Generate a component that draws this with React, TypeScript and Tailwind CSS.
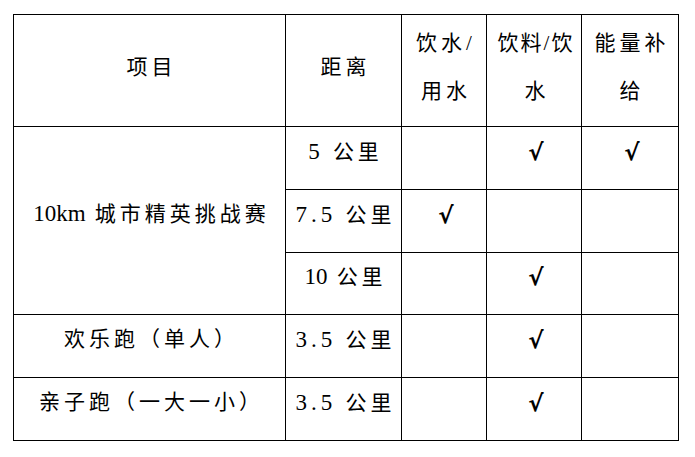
import React from 'react';

type Row = {
    item?: React.ReactNode;
    span?: number;
    dist: React.ReactNode;
    water: boolean;
    drink: boolean;
    energy: boolean;
};

// 西文数字：Times 体，略大；tight 时不加字距
const Num = ({ children, tight }: { children: React.ReactNode; tight?: boolean }) => (
    <span className={'text-[23px]' + (tight ? ' tracking-normal' : '')}>{children}</span>
);

// 补给点表：第一项跨三行
const rows: Row[] = [
    { item: <><Num tight>10km</Num> 城市精英挑战赛</>, span: 3, dist: <><Num>5</Num> 公里</>, water: false, drink: true, energy: true },
    { dist: <><Num>7.5</Num> 公里</>, water: true, drink: false, energy: false },
    { dist: <><Num tight>10</Num> 公里</>, water: false, drink: true, energy: false },
    { item: '欢乐跑（单人）', span: 1, dist: <><Num>3.5</Num> 公里</>, water: false, drink: true, energy: false },
    { item: '亲子跑（一大一小）', span: 1, dist: <><Num>3.5</Num> 公里</>, water: false, drink: true, energy: false },
];

const cell = 'border-[1.5px] border-black text-center align-middle p-0 pb-3 pl-1';
const head = 'border-[1.5px] border-black text-center align-middle p-0 pb-2 pl-1 leading-[48px] font-normal';

function Check({ on }: { on: boolean }) {
    if (!on) return null;
    return <span className="[font-family:'DejaVu_Sans',sans-serif] font-bold text-[23px] tracking-normal">√</span>;
}

export default function App() {
    return (
        <div className="w-[695px] h-[457px] bg-white pt-[14px] pl-[13px] [font-family:'Liberation_Serif','Noto_Sans_CJK_SC',serif] text-[21px] tracking-[4px] text-black">
            <table className="table-fixed border-collapse w-[665px]">
                <colgroup>
                    <col className="w-[272px]" />
                    <col className="w-[116px]" />
                    <col className="w-[85px]" />
                    <col className="w-[95px]" />
                    <col className="w-[97px]" />
                </colgroup>
                <thead>
                    <tr className="h-[112px]">
                        <th className={head}>项目</th>
                        <th className={head}>距离</th>
                        <th className={head}>饮水/<br />用水</th>
                        <th className={head + ' tracking-[2px]'}>饮料/饮<br />水</th>
                        <th className={head}>能量补<br />给</th>
                    </tr>
                </thead>
                <tbody>
                    {rows.map((r, i) => (
                        <tr key={i} className={i === 2 ? 'h-[62px]' : 'h-[63px]'}>
                            {r.item && <td rowSpan={r.span} className={cell}>{r.item}</td>}
                            <td className={cell}>{r.dist}</td>
                            <td className={cell}><Check on={r.water} /></td>
                            <td className={cell}><Check on={r.drink} /></td>
                            <td className={cell}><Check on={r.energy} /></td>
                        </tr>
                    ))}
                </tbody>
            </table>
        </div>
    );
}
